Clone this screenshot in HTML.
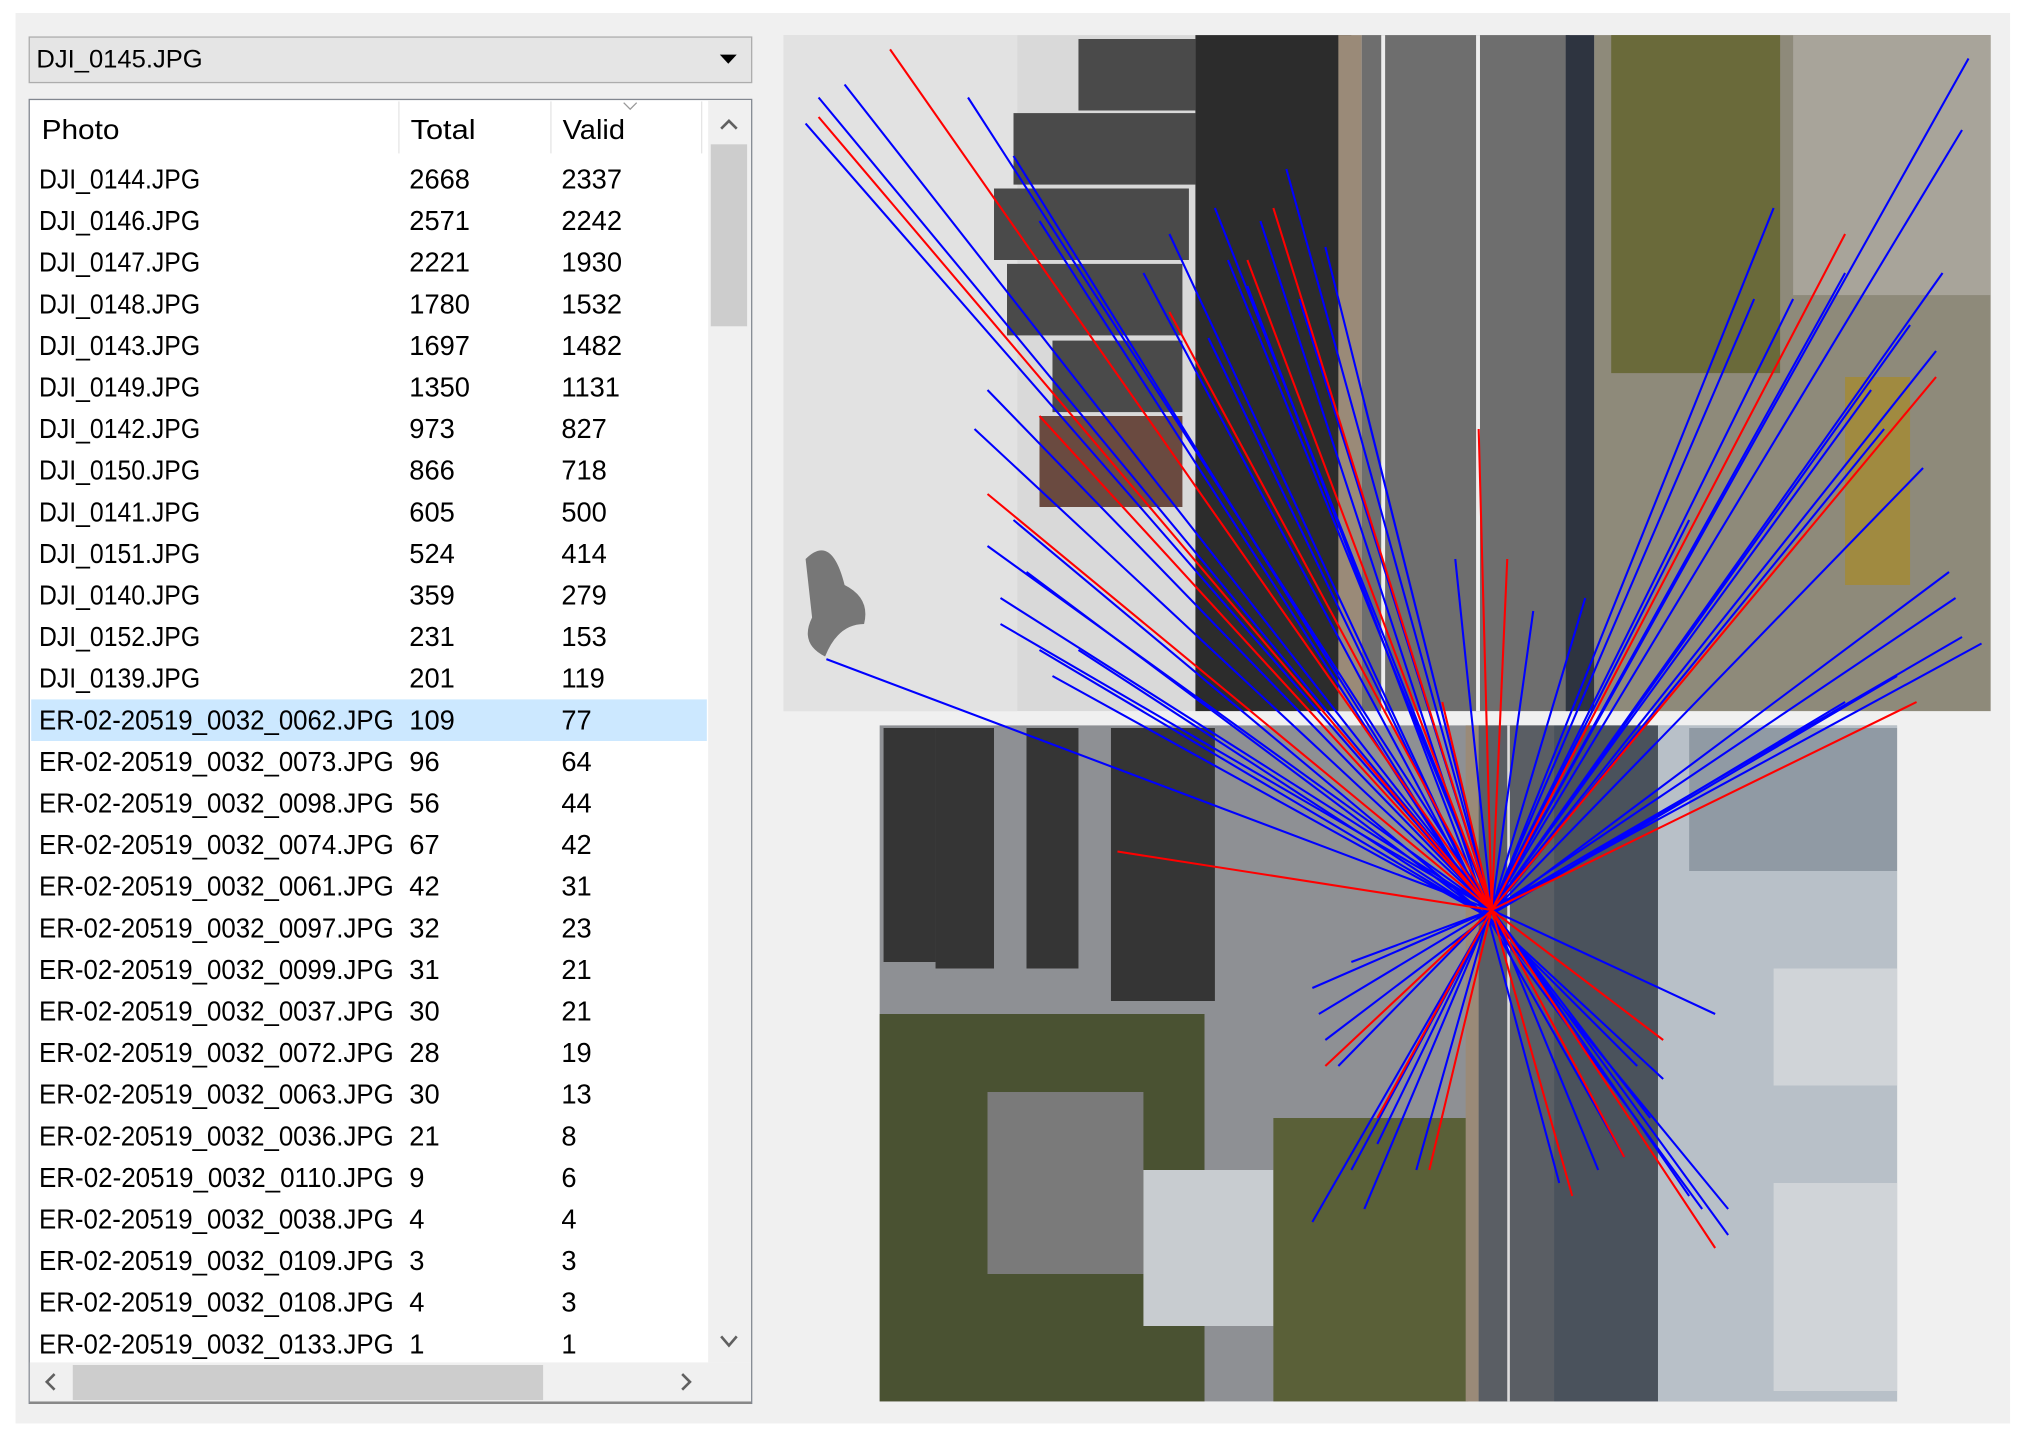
<!DOCTYPE html>
<html><head><meta charset="utf-8"><style>
html,body{margin:0;padding:0;background:#fff;}
svg{display:block}
text{font-family:"Liberation Sans",sans-serif;fill:#000}
</style></head><body>
<svg width="2027" height="1430" viewBox="0 0 1560 1100" preserveAspectRatio="none" xmlns="http://www.w3.org/2000/svg">
<rect width="1560" height="1100" fill="#fff"/>
<rect x="12" y="10" width="1535" height="1085" fill="#f0f0f0"/>
<rect x="22.5" y="28.5" width="556" height="35" fill="#e5e5e5" stroke="#adadad"/>
<text x="28" y="52" font-size="19" textLength="128" lengthAdjust="spacingAndGlyphs">DJI_0145.JPG</text>
<polygon points="554,42 567,42 560.5,49" fill="#000"/>
<rect x="22.5" y="76.5" width="556" height="1003" fill="#fff" stroke="#828790"/>
<line x1="23" y1="1079" x2="578" y2="1079" stroke="#888" stroke-width="2"/>
<line x1="307" y1="78" x2="307" y2="118" stroke="#e5e5e5"/>
<line x1="424" y1="78" x2="424" y2="118" stroke="#e5e5e5"/>
<line x1="540" y1="78" x2="540" y2="118" stroke="#e5e5e5"/>
<polyline points="480,79 485,84 490,79" fill="none" stroke="#999" stroke-width="1"/>
<text x="32" y="107" font-size="21" textLength="60" lengthAdjust="spacingAndGlyphs">Photo</text>
<text x="316" y="107" font-size="21" textLength="50" lengthAdjust="spacingAndGlyphs">Total</text>
<text x="433" y="107" font-size="21" textLength="48" lengthAdjust="spacingAndGlyphs">Valid</text>
<rect x="545" y="77" width="33" height="971" fill="#f0f0f0"/>
<rect x="547" y="111" width="28" height="140" fill="#cdcdcd"/>
<polyline points="555,99 561,93 567,99" fill="none" stroke="#606060" stroke-width="2"/>
<polyline points="555,1028 561,1035 567,1028" fill="none" stroke="#606060" stroke-width="2"/>
<rect x="23" y="1048" width="555" height="30" fill="#f0f0f0"/>
<rect x="56" y="1050" width="362" height="27" fill="#cdcdcd"/>
<polyline points="42,1057 36,1063 42,1069" fill="none" stroke="#606060" stroke-width="2"/>
<polyline points="525,1057 531,1063 525,1069" fill="none" stroke="#606060" stroke-width="2"/>
<rect x="24" y="538" width="520" height="32" fill="#cce8ff"/>
<g font-size="21" lengthAdjust="spacingAndGlyphs">
<text x="30" y="145" textLength="124" lengthAdjust="spacingAndGlyphs">DJI_0144.JPG</text><text x="315" y="145">2668</text><text x="432" y="145">2337</text>
<text x="30" y="177" textLength="124" lengthAdjust="spacingAndGlyphs">DJI_0146.JPG</text><text x="315" y="177">2571</text><text x="432" y="177">2242</text>
<text x="30" y="209" textLength="124" lengthAdjust="spacingAndGlyphs">DJI_0147.JPG</text><text x="315" y="209">2221</text><text x="432" y="209">1930</text>
<text x="30" y="241" textLength="124" lengthAdjust="spacingAndGlyphs">DJI_0148.JPG</text><text x="315" y="241">1780</text><text x="432" y="241">1532</text>
<text x="30" y="273" textLength="124" lengthAdjust="spacingAndGlyphs">DJI_0143.JPG</text><text x="315" y="273">1697</text><text x="432" y="273">1482</text>
<text x="30" y="305" textLength="124" lengthAdjust="spacingAndGlyphs">DJI_0149.JPG</text><text x="315" y="305">1350</text><text x="432" y="305">1131</text>
<text x="30" y="337" textLength="124" lengthAdjust="spacingAndGlyphs">DJI_0142.JPG</text><text x="315" y="337">973</text><text x="432" y="337">827</text>
<text x="30" y="369" textLength="124" lengthAdjust="spacingAndGlyphs">DJI_0150.JPG</text><text x="315" y="369">866</text><text x="432" y="369">718</text>
<text x="30" y="401" textLength="124" lengthAdjust="spacingAndGlyphs">DJI_0141.JPG</text><text x="315" y="401">605</text><text x="432" y="401">500</text>
<text x="30" y="433" textLength="124" lengthAdjust="spacingAndGlyphs">DJI_0151.JPG</text><text x="315" y="433">524</text><text x="432" y="433">414</text>
<text x="30" y="465" textLength="124" lengthAdjust="spacingAndGlyphs">DJI_0140.JPG</text><text x="315" y="465">359</text><text x="432" y="465">279</text>
<text x="30" y="497" textLength="124" lengthAdjust="spacingAndGlyphs">DJI_0152.JPG</text><text x="315" y="497">231</text><text x="432" y="497">153</text>
<text x="30" y="529" textLength="124" lengthAdjust="spacingAndGlyphs">DJI_0139.JPG</text><text x="315" y="529">201</text><text x="432" y="529">119</text>
<text x="30" y="561" textLength="273" lengthAdjust="spacingAndGlyphs">ER-02-20519_0032_0062.JPG</text><text x="315" y="561">109</text><text x="432" y="561">77</text>
<text x="30" y="593" textLength="273" lengthAdjust="spacingAndGlyphs">ER-02-20519_0032_0073.JPG</text><text x="315" y="593">96</text><text x="432" y="593">64</text>
<text x="30" y="625" textLength="273" lengthAdjust="spacingAndGlyphs">ER-02-20519_0032_0098.JPG</text><text x="315" y="625">56</text><text x="432" y="625">44</text>
<text x="30" y="657" textLength="273" lengthAdjust="spacingAndGlyphs">ER-02-20519_0032_0074.JPG</text><text x="315" y="657">67</text><text x="432" y="657">42</text>
<text x="30" y="689" textLength="273" lengthAdjust="spacingAndGlyphs">ER-02-20519_0032_0061.JPG</text><text x="315" y="689">42</text><text x="432" y="689">31</text>
<text x="30" y="721" textLength="273" lengthAdjust="spacingAndGlyphs">ER-02-20519_0032_0097.JPG</text><text x="315" y="721">32</text><text x="432" y="721">23</text>
<text x="30" y="753" textLength="273" lengthAdjust="spacingAndGlyphs">ER-02-20519_0032_0099.JPG</text><text x="315" y="753">31</text><text x="432" y="753">21</text>
<text x="30" y="785" textLength="273" lengthAdjust="spacingAndGlyphs">ER-02-20519_0032_0037.JPG</text><text x="315" y="785">30</text><text x="432" y="785">21</text>
<text x="30" y="817" textLength="273" lengthAdjust="spacingAndGlyphs">ER-02-20519_0032_0072.JPG</text><text x="315" y="817">28</text><text x="432" y="817">19</text>
<text x="30" y="849" textLength="273" lengthAdjust="spacingAndGlyphs">ER-02-20519_0032_0063.JPG</text><text x="315" y="849">30</text><text x="432" y="849">13</text>
<text x="30" y="881" textLength="273" lengthAdjust="spacingAndGlyphs">ER-02-20519_0032_0036.JPG</text><text x="315" y="881">21</text><text x="432" y="881">8</text>
<text x="30" y="913" textLength="273" lengthAdjust="spacingAndGlyphs">ER-02-20519_0032_0110.JPG</text><text x="315" y="913">9</text><text x="432" y="913">6</text>
<text x="30" y="945" textLength="273" lengthAdjust="spacingAndGlyphs">ER-02-20519_0032_0038.JPG</text><text x="315" y="945">4</text><text x="432" y="945">4</text>
<text x="30" y="977" textLength="273" lengthAdjust="spacingAndGlyphs">ER-02-20519_0032_0109.JPG</text><text x="315" y="977">3</text><text x="432" y="977">3</text>
<text x="30" y="1009" textLength="273" lengthAdjust="spacingAndGlyphs">ER-02-20519_0032_0108.JPG</text><text x="315" y="1009">4</text><text x="432" y="1009">3</text>
<text x="30" y="1041" textLength="273" lengthAdjust="spacingAndGlyphs">ER-02-20519_0032_0133.JPG</text><text x="315" y="1041">1</text><text x="432" y="1041">1</text>
</g>
<!-- top aerial -->
<rect x="603" y="27" width="929" height="520" fill="#d9d9d9"/>
<rect x="603" y="27" width="180" height="520" fill="#e2e2e2"/>
<path d="M620,430 q20,-20 30,20 q20,10 15,30 q-20,0 -30,25 q-20,-10 -10,-30 z" fill="#777"/>
<rect x="830" y="30" width="90" height="55" fill="#4a4a4a"/>
<rect x="780" y="87" width="140" height="55" fill="#4a4a4a"/>
<rect x="765" y="145" width="150" height="55" fill="#4a4a4a"/>
<rect x="775" y="203" width="135" height="55" fill="#4a4a4a"/>
<rect x="810" y="262" width="100" height="55" fill="#4a4a4a"/>
<rect x="800" y="320" width="110" height="70" fill="#6a4a40"/>
<rect x="920" y="27" width="120" height="520" fill="#2c2c2c"/>
<rect x="1030" y="27" width="18" height="520" fill="#9a8a78"/>
<rect x="1048" y="27" width="160" height="520" fill="#6e6e6e"/>
<rect x="1063" y="27" width="3" height="520" fill="#eee"/>
<rect x="1136" y="27" width="3" height="520" fill="#eee"/>
<rect x="1205" y="27" width="22" height="520" fill="#2e3440"/>
<rect x="1227" y="27" width="305" height="520" fill="#8e8a7a"/>
<rect x="1240" y="27" width="130" height="260" fill="#6a6a3a"/>
<rect x="1380" y="27" width="152" height="200" fill="#a8a49a"/>
<rect x="1420" y="290" width="50" height="160" fill="#a08a40"/>
<!-- bottom aerial -->
<rect x="677" y="558" width="783" height="520" fill="#8e9094"/>
<rect x="680" y="560" width="40" height="180" fill="#353535"/>
<rect x="720" y="560" width="45" height="185" fill="#353535"/>
<rect x="790" y="560" width="40" height="185" fill="#353535"/>
<rect x="855" y="560" width="80" height="210" fill="#353535"/>
<rect x="677" y="780" width="250" height="298" fill="#4a5232"/>
<rect x="760" y="840" width="120" height="140" fill="#7a7a7a"/>
<rect x="880" y="900" width="100" height="120" fill="#c8ccd0"/>
<rect x="980" y="860" width="150" height="218" fill="#5a6038"/>
<rect x="1128" y="558" width="10" height="520" fill="#9a8a78"/>
<rect x="1138" y="558" width="58" height="520" fill="#5a5e64"/>
<rect x="1160" y="558" width="2" height="520" fill="#ddd"/>
<rect x="1196" y="558" width="80" height="520" fill="#4a525c"/>
<rect x="1276" y="558" width="184" height="520" fill="#b8c0c8"/>
<rect x="1365" y="745" width="95" height="90" fill="#d0d4d8"/>
<rect x="1365" y="910" width="95" height="160" fill="#d0d4d8"/>
<rect x="1300" y="560" width="160" height="110" fill="#909aa4"/>
<g stroke-width="1.6" fill="none">
<g stroke="#0000ff">
<path d="M1148,700L620,95M1148,700L630,75M1148,700L650,65M1148,700L745,75M1148,700L760,300M1148,700L750,330M1148,700L760,420M1148,700L770,460M1148,700L770,480M1148,700L636,507M1148,700L990,130M1148,700L935,160M1148,700L945,200M1148,700L1000,230M1148,700L1020,190M1148,700L1050,310M1148,700L1515,45M1148,700L1510,100M1148,700L1495,210M1148,700L1490,270M1148,700L1505,460M1148,700L1510,490M1148,700L1525,495M1148,700L1365,160M1148,700L1300,400M1148,700L1440,300M1148,700L1470,250M1148,700L1320,780M1148,700L1010,760M1148,700L1015,780M1148,700L1030,820M1148,700L1040,900M1148,700L1010,940M1148,700L1230,900M1148,700L1270,860M1148,700L1330,950M1148,700L1300,920M1148,700L1120,430M1148,700L1220,460M1148,700L1180,470M1148,700L1350,230M1148,700L1040,740"/>
<path d="M1145,705L780,120M1145,705L800,170M1145,705L880,210M1145,705L900,180M1145,705L960,220M1145,705L930,260M1145,705L970,170M1145,705L780,400M1145,705L790,440M1145,705L800,500M1145,705L810,520M1145,705L830,500M1145,705L1380,230M1145,705L1420,210M1145,705L1450,330M1145,705L1480,360M1145,705L1500,440M1145,705L1460,520M1145,705L1420,540M1145,705L1250,890M1145,705L1280,830M1145,705L1310,930M1145,705L1200,910M1145,705L1050,930M1145,705L1020,800M1145,705L1060,880M1145,705L1090,900M1145,705L1330,930M1145,705L1260,820"/>
</g>
<g stroke="#ff0000">
<path d="M1148,700L685,38M1148,700L630,90M1148,700L760,380M1148,700L800,320M1148,700L860,655M1148,700L960,200M1148,700L980,160M1148,700L1138,330M1148,700L1420,180M1148,700L1490,290M1148,700L1475,540M1148,700L1320,960M1148,700L1250,890M1148,700L1020,820M1148,700L1060,860M1148,700L1110,540M1148,700L1160,430M1148,700L1280,800M1148,700L900,240M1148,700L1210,920M1148,700L1100,900M1148,700L1390,410"/>
</g>
</g>
</svg>
</body></html>
